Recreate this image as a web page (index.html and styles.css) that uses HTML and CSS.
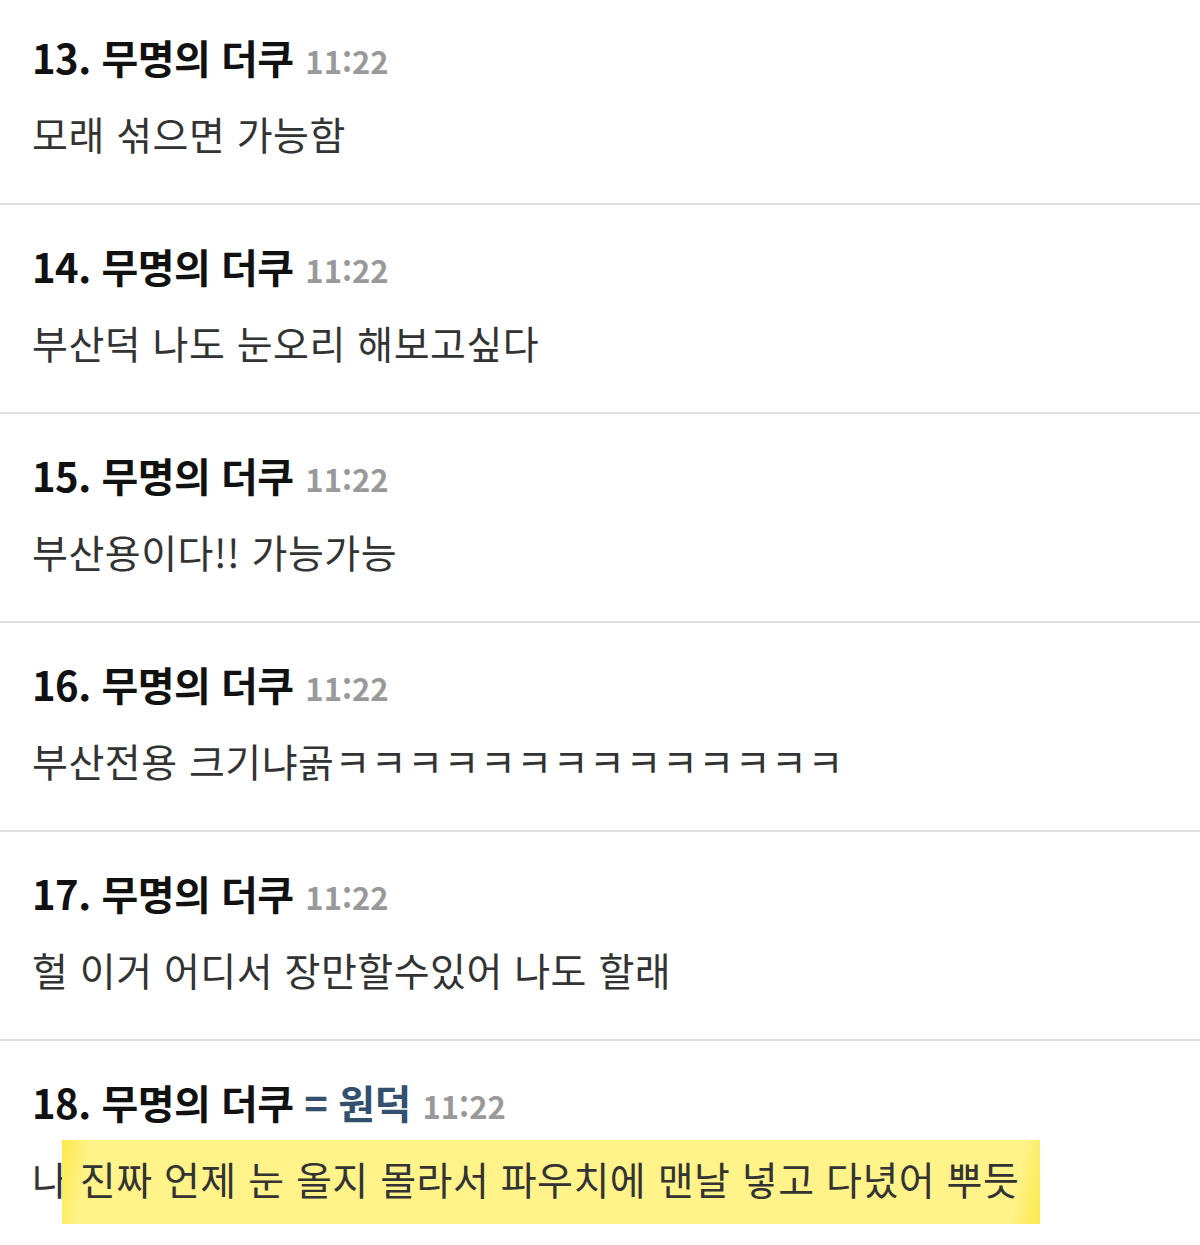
FILE: index.html
```html
<!DOCTYPE html>
<html lang="ko">
<head>
    <meta charset="UTF-8">
    <meta name="viewport" content="width=device-width, initial-scale=1.0">
    <title>댓글</title>
    <link rel="stylesheet" href="styles.css">
</head>
<body>
    <div id="comments">
        <div class="comment first">
            <div class="comment-head">13. 무명의 더쿠 <span class="time">11:22</span></div>
            <p class="comment-body">모래 섞으면 가능함</p>
        </div>
        <div class="comment">
            <div class="comment-head">14. 무명의 더쿠 <span class="time">11:22</span></div>
            <p class="comment-body">부산덕 나도 눈오리 해보고싶다</p>
        </div>
        <div class="comment">
            <div class="comment-head">15. 무명의 더쿠 <span class="time">11:22</span></div>
            <p class="comment-body">부산용이다!! 가능가능</p>
        </div>
        <div class="comment">
            <div class="comment-head">16. 무명의 더쿠 <span class="time">11:22</span></div>
            <p class="comment-body">부산전용 크기냐곩ㅋㅋㅋㅋㅋㅋㅋㅋㅋㅋㅋㅋㅋㅋ</p>
        </div>
        <div class="comment">
            <div class="comment-head">17. 무명의 더쿠 <span class="time">11:22</span></div>
            <p class="comment-body">헐 이거 어디서 장만할수있어 나도 할래</p>
        </div>
        <div class="comment last">
            <div class="comment-head">18. 무명의 더쿠 <span class="writer">= 원덕</span> <span class="time">11:22</span></div>
            <p class="comment-body">나<span class="highlight"> 진짜 언제 눈 올지 몰라서 파우치에 맨날 넣고 다녔어 뿌듯</span></p>
        </div>
    </div>
</body>
</html>
```

FILE: styles.css
```css
body {
    margin: 0;
    background: #fff;
    font-family: "Noto Sans CJK KR", "Noto Sans", sans-serif;
    color: #333;
}
#comments {
    width: 1200px;
}
.comment {
    box-sizing: border-box;
    height: 209px;
    padding: 35px 32px 0;
    border-bottom: 2px solid #e0e0e0;
}
.comment.first {
    height: 205px;
    padding-top: 31px;
}
.comment.last {
    border-bottom: none;
}
.comment-head {
    font-size: 40px;
    line-height: 52px;
    font-weight: bold;
    color: #111;
    letter-spacing: -0.5px;
}
.time {
    font-size: 31px;
    color: #999;
    letter-spacing: 0;
    margin-left: 1px;
}
.writer {
    color: #34506f;
}
.comment-body {
    margin: 20px 0 0;
    font-size: 39px;
    line-height: 52px;
    letter-spacing: 0.5px;
}
.highlight {
    background: linear-gradient(100deg, #fbe94a 0, #fff38a 3%, #fff38a 97%, #fbe94a 100%);
    margin-left: -6px;
    padding: 10px 21px 18px 6px;
}
```
